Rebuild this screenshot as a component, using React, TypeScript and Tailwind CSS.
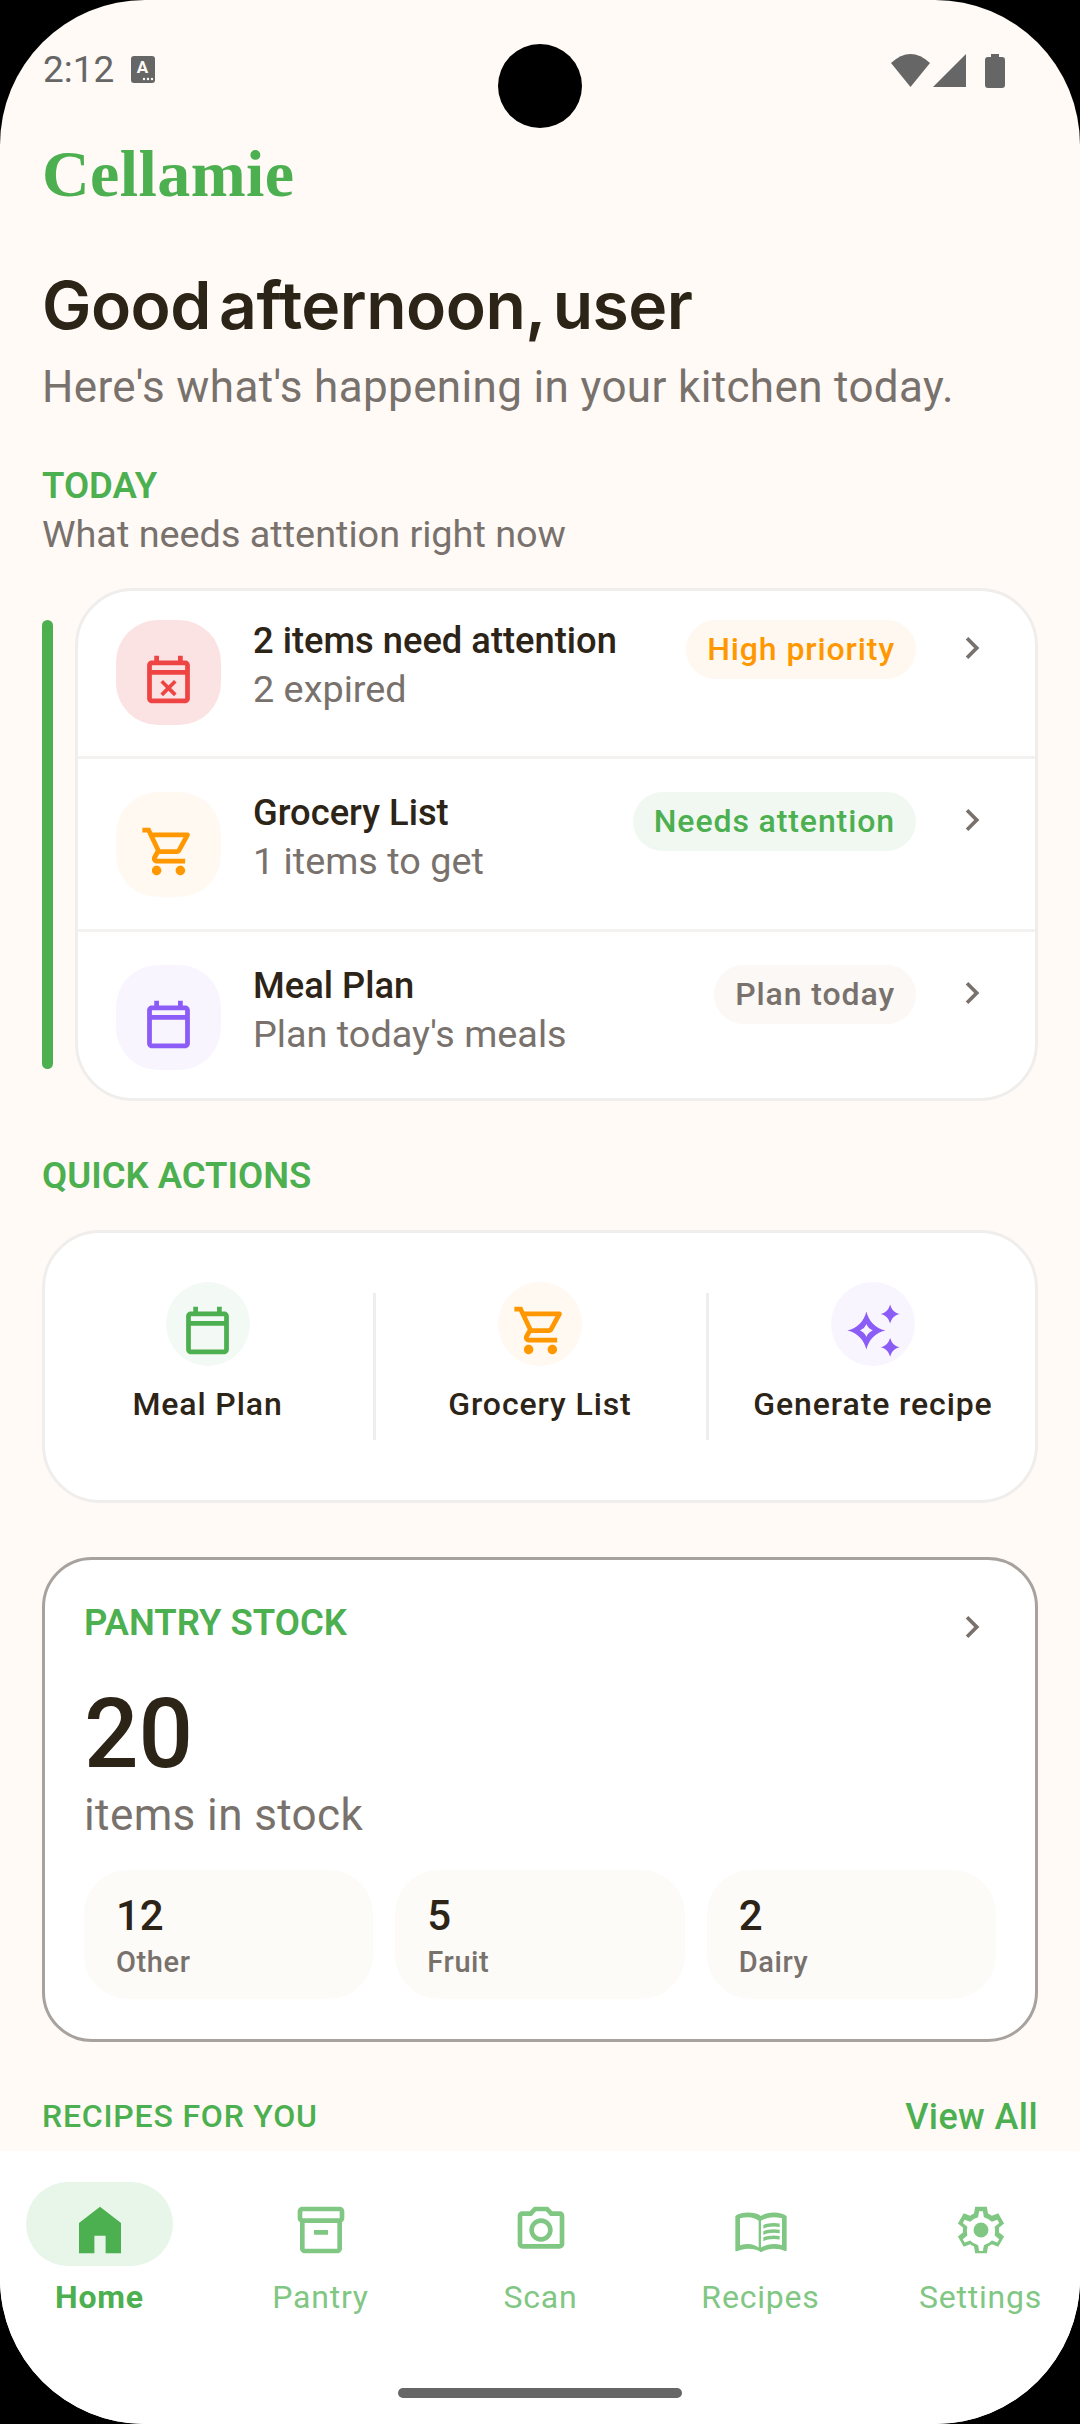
import React from 'react';

const GREEN = '#4caf50';

// Material-style icon paths, all on a 24 unit grid
const PATHS = {
  calendar:
    'M19 4h-1V2h-2v2H8V2H6v2H5c-1.1 0-2 .9-2 2v14c0 1.1.9 2 2 2h14c1.1 0 2-.9 2-2V6c0-1.1-.9-2-2-2zm0 16H5V10h14v10zm0-12H5V6h14v2z',
  calendarX:
    'M19 4h-1V2h-2v2H8V2H6v2H5c-1.1 0-2 .9-2 2v14c0 1.1.9 2 2 2h14c1.1 0 2-.9 2-2V6c0-1.1-.9-2-2-2zm0 16H5V10h14v10zm0-12H5V6h14v2zM9.700 12.200L12 14.500l2.300-2.300 1.100 1.100-2.300 2.300 2.300 2.300-1.100 1.100-2.300-2.300-2.300 2.300-1.100-1.100 2.300-2.300-2.300-2.300z',
  cart:
    'M15.55 13c.75 0 1.41-.41 1.75-1.03l3.58-6.49c.37-.66-.11-1.48-.87-1.48H5.21l-.94-2H1v2h2l3.6 7.59-1.35 2.44C4.52 15.37 5.48 17 7 17h12v-2H7l1.1-2h7.45zM6.16 6h12.15l-2.76 5H8.53L6.16 6zM7 18c-1.1 0-1.99.9-1.99 2S5.9 22 7 22s2-.9 2-2-.9-2-2-2zm10 0c-1.1 0-1.99.9-1.99 2s.89 2 1.99 2 2-.9 2-2-.9-2-2-2z',
  sparkles:
    'M19 1c.6 2.200 1.800 3.400 4 4-2.200.6-3.400 1.800-4 4-.6-2.200-1.800-3.400-4-4 2.200-.6 3.400-1.800 4-4zm0 14c.6 2.200 1.800 3.400 4 4-2.200.6-3.400 1.800-4 4-.6-2.200-1.800-3.400-4-4 2.200-.6 3.400-1.800 4-4zM9 4c1 4.200 3.800 7 8 8-4.200 1-7 3.800-8 8-1-4.200-3.800-7-8-8 4.200-1 7-3.800 8-8zm0 5.300c-.45 1.200-1.500 2.250-2.700 2.700 1.200.45 2.250 1.500 2.700 2.700.45-1.200 1.500-2.250 2.700-2.700-1.200-.45-2.250-1.500-2.700-2.700z',
  chevron: 'M10 6L8.59 7.41 13.17 12l-4.58 4.59L10 18l6-6z',
  home: 'M3 22V9l9-7 9 7v13h-6.600v-7.500H9.600V22z',
  box:
    'M20 2H4c-1 0-2 .9-2 2v3.010c0 .72.43 1.340 1 1.690V20c0 1.100 1.100 2 2 2h14c.9 0 2-.9 2-2V8.700c.57-.35 1-.97 1-1.690V4c0-1.100-1-2-2-2zm-1 18H5V9h14v11zm1-13H4V4h16v3zM9 12h6v2H9z',
  camera:
    'M14.120 4l1.830 2H20v12H4V6h4.050l1.830-2h4.240M15 2H9L7.170 4H4c-1.100 0-2 .9-2 2v12c0 1.100.9 2 2 2h16c1.100 0 2-.9 2-2V6c0-1.100-.9-2-2-2h-3.170L15 2zm-3 7c1.650 0 3 1.350 3 3s-1.350 3-3 3-3-1.350-3-3 1.350-3 3-3m0-2c-2.760 0-5 2.240-5 5s2.240 5 5 5 5-2.240 5-5-2.240-5-5-5z',
  book:
    'M21 5c-1.110-.35-2.330-.5-3.500-.5-1.950 0-4.050.4-5.500 1.500-1.450-1.100-3.550-1.500-5.500-1.500S2.450 4.900 1 6v14.650c0 .25.25.5.5.5.1 0 .15-.05.25-.05C3.100 20.450 5.050 20 6.500 20c1.950 0 4.050.4 5.500 1.500 1.350-.85 3.800-1.500 5.500-1.500 1.650 0 3.350.3 4.750 1.050.1.05.15.05.25.05.25 0 .5-.25.5-.5V6c-.6-.45-1.250-.75-2-1zm0 13.500c-1.100-.35-2.300-.5-3.500-.5-1.700 0-4.150.65-5.500 1.500V8c1.350-.85 3.800-1.500 5.500-1.500 1.200 0 2.400.15 3.500.5v11.500zM3 7c1.100-.35 2.300-.5 3.500-.5 1.700 0 3.150.650 4.500 1.500v11.500c-1.350-.85-2.800-1.500-4.500-1.500-1.200 0-2.400.15-3.500.5V7zM17.500 10.500c.88 0 1.730.09 2.500.26V9.240c-.79-.15-1.640-.24-2.500-.24-1.700 0-3.240.29-4.500.83v1.660c1.130-.64 2.700-.99 4.500-.99zM13 12.490v1.660c1.130-.64 2.700-.99 4.500-.99.88 0 1.730.09 2.500.26V11.900c-.79-.15-1.640-.24-2.500-.24-1.700 0-3.240.3-4.500.83zM17.500 14.330c-1.700 0-3.240.29-4.500.83v1.660c1.130-.64 2.700-.99 4.500-.99.88 0 1.730.09 2.500.26v-1.520c-.79-.16-1.640-.24-2.500-.24z',
  gear:
    'M14.500 2h-5l-.5 2.900c-.6.25-1.150.55-1.650.95L4.600 4.800 2.100 9.200l2.250 1.850c-.05.3-.1.6-.1.95s.05.65.1.95L2.100 14.800l2.500 4.400 2.750-1.050c.5.4 1.050.7 1.650.95l.5 2.900h5l.5-2.900c.6-.25 1.150-.55 1.650-.95l2.750 1.050 2.500-4.400-2.250-1.850c.05-.3.1-.6.1-.95s-.05-.65-.1-.95L21.900 9.200l-2.500-4.400-2.750 1.050c-.5-.4-1.050-.7-1.650-.95L14.500 2zm-3.300 2h1.600l.45 2.500 1.050.45c.55.2 1.050.5 1.450.85l.9.7 2.350-.9.8 1.400-1.950 1.600.15 1.150c.05.3.05.55.05.75s0 .45-.05.75l-.15 1.150 1.950 1.600-.8 1.400-2.350-.9-.9.7c-.4.35-.9.65-1.450.85l-1.050.45-.45 2.500h-1.600l-.45-2.500-1.050-.45c-.55-.2-1.050-.5-1.450-.85l-.9-.7-2.350.9-.8-1.400 1.950-1.600-.15-1.150c-.05-.3-.05-.55-.05-.75s0-.45.05-.75l.15-1.150-1.950-1.600.8-1.400 2.350.9.9-.7c.4-.35.9-.65 1.450-.85l1.050-.45.45-2.500zM12 8.800a3.200 3.200 0 100 6.400 3.200 3.200 0 000-6.400z',
};

type IconName = keyof typeof PATHS;

function Icon({ name, color, size = 57 }: { name: IconName; color: string; size?: number }) {
  return (
    <svg width={size} height={size} viewBox="0 0 24 24" fill={color} fillRule="evenodd" className="shrink-0">
      <path d={PATHS[name]} />
    </svg>
  );
}

function Chevron() {
  return <Icon name="chevron" color="#78716c" size={44} />;
}

function StatusBar() {
  return (
    <div className="flex h-[130px] shrink-0 items-start justify-between pl-[43px] pr-[75px] pt-[50px] text-[#666666]">
      <div className="flex items-center gap-[17px]">
        <span className="text-[37px] leading-[40px]">2:12</span>
        <svg width="24" height="27" viewBox="0 0 24 27" className="mt-[-1px]">
          <rect width="24" height="27" rx="3" fill="#666666" />
          <text x="11.500" y="17" textAnchor="middle" fontSize="17" fontWeight="700" fill="#fffaf6">
            A
          </text>
          <circle cx="13" cy="23" r="1.200" fill="#fffaf6" />
          <circle cx="17" cy="23" r="1.200" fill="#fffaf6" />
          <circle cx="21" cy="23" r="1.200" fill="#fffaf6" />
        </svg>
      </div>
      <div className="mt-[4px] flex items-start">
        <svg width="39" height="33" viewBox="0 0 39 33" fill="#666666">
          <path d="M0 9Q19.500-9 39 9L19.500 33z" />
        </svg>
        <svg width="33" height="33" viewBox="0 0 33 33" fill="#666666" className="ml-[3px]">
          <path d="M33 0v33H0z" />
        </svg>
        <svg width="20" height="34" viewBox="0 0 20 34" fill="#666666" className="ml-[19px]">
          <path d="M6 0h8v3h3a3 3 0 013 3v25a3 3 0 01-3 3H3a3 3 0 01-3-3V6a3 3 0 013-3h3z" />
        </svg>
      </div>
    </div>
  );
}

const TODAY_ROWS: {
  title: string;
  sub: string;
  badge: string;
  icon: IconName;
  iconColor: string;
  tile: string;
  pill: string;
}[] = [
  {
    title: '2 items need attention',
    sub: '2 expired',
    badge: 'High priority',
    icon: 'calendarX',
    iconColor: '#ef4444',
    tile: 'bg-[#fce3e3]',
    pill: 'bg-[#fff8f1] text-[#ff9800]',
  },
  {
    title: 'Grocery List',
    sub: '1 items to get',
    badge: 'Needs attention',
    icon: 'cart',
    iconColor: '#ff9800',
    tile: 'bg-[#fff9f2]',
    pill: 'bg-[#f1f8f2] text-[#4caf50]',
  },
  {
    title: 'Meal Plan',
    sub: "Plan today's meals",
    badge: 'Plan today',
    icon: 'calendar',
    iconColor: '#8b5cf6',
    tile: 'bg-[#f9f5ff]',
    pill: 'bg-[#fbf8f5] text-[#78716c]',
  },
];

function TodayCard() {
  return (
    <div className="mt-[30px] flex gap-[22px]">
      <div className="mt-[32px] h-[449px] w-[11px] shrink-0 rounded-full bg-[#4caf50]" />
      <div className="min-w-0 flex-1 overflow-hidden rounded-[58px] border-[3px] border-[#f0eeec] bg-white">
        {TODAY_ROWS.map((row) => (
          <div
            key={row.title}
            className="flex items-start border-b-[3px] border-[#f3f2f1] pb-[32px] pl-[38px] pr-[41px] pt-[33px] first:pb-[31px] first:pt-[29px] last:border-b-0 last:pb-[28px]"
          >
            <div className={`flex h-[105px] w-[105px] shrink-0 items-center justify-center rounded-[42px] pt-[13px] ${row.tile}`}>
              <Icon name={row.icon} color={row.iconColor} />
            </div>
            <div className="ml-[32px] mt-[-2px] min-w-0 flex-1">
              <div className="text-[36.300px] font-medium leading-[46px] text-[#2d2418]">{row.title}</div>
              <div className="mt-[2px] text-[37.800px] leading-[46px] text-[#78716c]">{row.sub}</div>
            </div>
            <div className={`flex h-[59px] items-center rounded-full px-[21px] pb-[2px] text-[32px] font-medium tracking-[0.9px] ${row.pill}`}>
              {row.badge}
            </div>
            <div className="ml-[34px] mt-[6px]">
              <Chevron />
            </div>
          </div>
        ))}
      </div>
    </div>
  );
}

const QUICK_ACTIONS: { label: string; icon: IconName; color: string; tile: string; cell: string }[] = [
  { label: 'Meal Plan', icon: 'calendar', color: GREEN, tile: 'bg-[#f3f9f4]', cell: 'w-[328px] pr-[3px]' },
  { label: 'Grocery List', icon: 'cart', color: '#ff9800', tile: 'bg-[#fff9f2]', cell: 'w-[330px] pr-[2px]' },
  { label: 'Generate recipe', icon: 'sparkles', color: '#8b5cf6', tile: 'bg-[#f9f5ff]', cell: 'flex-1 pl-[2px]' },
];

function QuickActions() {
  return (
    <div className="mt-[32px] flex h-[273px] items-start overflow-hidden rounded-[58px] border-[3px] border-[#f0eeec] bg-white pt-[49px]">
      {QUICK_ACTIONS.map((action, i) => (
        <React.Fragment key={action.label}>
          {i > 0 && <div className="mt-[11px] h-[147px] w-[3px] shrink-0 bg-[#efeeec]" />}
          <div className={`flex min-w-0 flex-col items-center ${action.cell}`}>
            <div className={`flex h-[84px] w-[84px] items-center justify-center rounded-full pt-[13px] ${action.tile}`}>
              <Icon name={action.icon} color={action.color} />
            </div>
            <div className="mt-[16px] whitespace-nowrap text-[32px] font-medium leading-[44px] tracking-[0.9px] text-[#2d2418]">
              {action.label}
            </div>
          </div>
        </React.Fragment>
      ))}
    </div>
  );
}

const STOCK = [
  { count: 12, label: 'Other' },
  { count: 5, label: 'Fruit' },
  { count: 2, label: 'Dairy' },
];

function PantryStock() {
  return (
    <div className="mt-[54px] rounded-[50px] border-[3px] border-[#a8a29e] bg-white px-[39px] pb-[40px] pt-[41px]">
      <div className="flex items-start justify-between">
        <span className="text-[36.500px] font-semibold leading-[44px] text-[#4caf50]">PANTRY STOCK</span>
        <div className="mr-[2px] mt-[4px]">
          <Chevron />
        </div>
      </div>
      <div className="mt-[35px] text-[96px] font-medium leading-[100px] text-[#2d2418]">20</div>
      <div className="mt-[6px] text-[44px] leading-[50px] tracking-[0.4px] text-[#78716c]">items in stock</div>
      <div className="mt-[30px] flex gap-[22px]">
        {STOCK.map((item) => (
          <div key={item.label} className="h-[129px] flex-1 rounded-[44px] bg-[#fcfbf8] pl-[32px] pt-[21px]">
            <div className="text-[42px] font-medium leading-[50px] text-[#2d2418]">{item.count}</div>
            <div className="mt-[2px] text-[29px] font-medium leading-[38px] tracking-[0.6px] text-[#78716c]">{item.label}</div>
          </div>
        ))}
      </div>
    </div>
  );
}

const TABS: { label: string; icon: IconName; active?: boolean }[] = [
  { label: 'Home', icon: 'home', active: true },
  { label: 'Pantry', icon: 'box' },
  { label: 'Scan', icon: 'camera' },
  { label: 'Recipes', icon: 'book' },
  { label: 'Settings', icon: 'gear' },
];

function BottomNav() {
  return (
    <nav className="flex h-[273px] shrink-0 flex-col bg-white">
      <div className="flex gap-[73px] pl-[26px] pt-[31px]">
        {TABS.map((tab) => (
          <div key={tab.label} className="flex w-[147px] shrink-0 flex-col items-center first:mr-[1px]">
            <div className={`flex h-[84px] w-[147px] justify-center rounded-full pt-[20px] ${tab.active ? 'bg-[#e8f5e9]' : ''}`}>
              <Icon name={tab.icon} color={tab.active ? GREEN : '#81c784'} size={56} />
            </div>
            <div
              className={`mt-[11px] text-[32px] leading-[40px] tracking-[0.8px] ${
                tab.active ? 'font-bold text-[#4caf50]' : 'text-[#81c784]'
              }`}
            >
              {tab.label}
            </div>
          </div>
        ))}
      </div>
      <div className="mb-[26px] mt-auto h-[10px] w-[284px] self-center rounded-full bg-[#666666]" />
    </nav>
  );
}

export default function App() {
  return (
    <div className="relative h-[2424px] w-[1080px] overflow-hidden bg-black font-['Roboto',sans-serif]">
      <div className="flex h-full flex-col overflow-hidden rounded-[145px] bg-[#fffaf6]">
        <StatusBar />
        <main className="min-h-0 flex-1 overflow-hidden px-[42px]">
          <h1 className="mt-[4px] font-['Liberation_Serif',serif] text-[66px] font-bold leading-[80px] tracking-[0.4px] text-[#4caf50]">
            Cellamie
          </h1>
          <h2 className="mt-[49px] font-['Inter',sans-serif] text-[66px] font-semibold leading-[84px] tracking-[-0.5px] text-[#2d2418] [word-spacing:-8px]">
            Good afternoon, user
          </h2>
          <p className="mt-[12px] text-[44px] leading-[56px] tracking-[0.36px] text-[#78716c]">
            Here's what's happening in your kitchen today.
          </p>
          <div className="mt-[49px] text-[36.500px] font-semibold leading-[44px] text-[#4caf50]">TODAY</div>
          <div className="mt-[2px] text-[37.800px] leading-[48px] text-[#78716c]">What needs attention right now</div>
          <TodayCard />
          <div className="mt-[53px] text-[36.500px] font-semibold leading-[44px] text-[#4caf50]">QUICK ACTIONS</div>
          <QuickActions />
          <PantryStock />
          <div className="mt-[50px] flex items-center justify-between">
            <span className="text-[32px] font-medium leading-[44px] tracking-[0.8px] text-[#4caf50]">RECIPES FOR YOU</span>
            <span className="mt-[3px] text-[36px] font-medium leading-[44px] tracking-[0.4px] text-[#4caf50]">View All</span>
          </div>
        </main>
        <BottomNav />
      </div>
      {/* camera cutout */}
      <div className="absolute left-[498px] top-[44px] h-[84px] w-[84px] rounded-full bg-black" />
    </div>
  );
}
